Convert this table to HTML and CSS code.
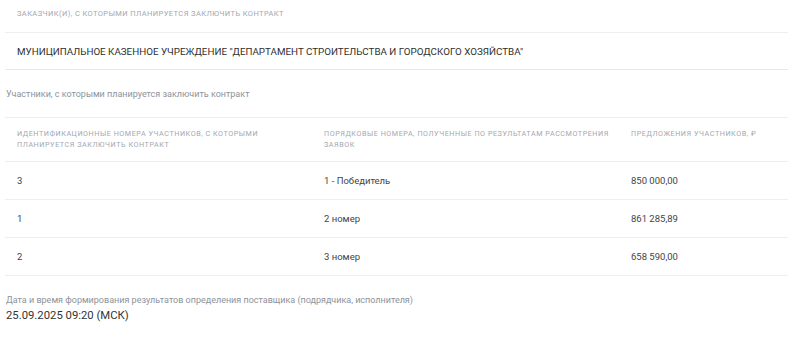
FILE: index.html
```html
<!DOCTYPE html>
<html lang="ru">
<head>
<meta charset="utf-8">
<link rel="stylesheet" href="styles.css">
</head>
<body>
<div class="page">
  <div class="cap-label">Заказчик(и), с которыми планируется заключить контракт</div>
  <div class="customer">МУНИЦИПАЛЬНОЕ КАЗЕННОЕ УЧРЕЖДЕНИЕ "ДЕПАРТАМЕНТ СТРОИТЕЛЬСТВА И ГОРОДСКОГО ХОЗЯЙСТВА"</div>
  <div class="sub-label">Участники, с которыми планируется заключить контракт</div>
  <div class="table">
    <div class="row head">
      <div class="cell">Идентификационные номера участников, с которыми планируется заключить контракт</div>
      <div class="cell">Порядковые номера, полученные по результатам рассмотрения заявок</div>
      <div class="cell">Предложения участников, ₽</div>
    </div>
    <div class="row">
      <div class="cell">3</div>
      <div class="cell">1 - Победитель</div>
      <div class="cell">850 000,00</div>
    </div>
    <div class="row">
      <div class="cell">1</div>
      <div class="cell">2 номер</div>
      <div class="cell">861 285,89</div>
    </div>
    <div class="row">
      <div class="cell">2</div>
      <div class="cell">3 номер</div>
      <div class="cell">658 590,00</div>
    </div>
  </div>
  <div class="date-block">
    <div class="date-label">Дата и время формирования результатов определения поставщика (подрядчика, исполнителя)</div>
    <div class="date-value">25.09.2025 09:20 (МСК)</div>
  </div>
</div>
</body>
</html>
```
FILE: styles.css
```css
html, body {
  margin: 0;
  padding: 0;
  background: #ffffff;
}
body {
  font-family: Roboto, "Noto Sans", sans-serif;
  color: #333333;
}
.page {
  width: 783px;
  margin-left: 5px;
}
.cap-label {
  padding: 9px 12px 0;
  height: 33px;
  box-sizing: border-box;
  font-size: 7.5px;
  line-height: 10px;
  text-transform: uppercase;
  letter-spacing: 0.4px;
  color: #a3a8b0;
  border-bottom: 1px solid #eceef0;
}
.customer {
  height: 37px;
  box-sizing: border-box;
  padding: 0 12px;
  display: flex;
  align-items: center;
  font-size: 9.8px;
  color: #2f2f2f;
  border-bottom: 1px solid #e6e8eb;
}
.sub-label {
  padding: 18px 1px 0;
  height: 48px;
  box-sizing: border-box;
  font-size: 9px;
  line-height: 12px;
  color: #8d939c;
  border-bottom: 1px solid #eceef0;
}
.row {
  display: grid;
  grid-template-columns: 307px 307px 1fr;
  height: 38px;
  box-sizing: border-box;
  align-items: center;
  border-bottom: 1px solid #eceef0;
  font-size: 9.5px;
  color: #444;
}
.row.head {
  height: 44px;
  align-items: start;
  padding-top: 10px;
  font-size: 7.2px;
  line-height: 11px;
  letter-spacing: 0.55px;
  text-transform: uppercase;
  color: #a3a8b0;
}
.cell {
  padding: 0 12px;
}
.row.head .cell {
  padding-right: 0;
}
.date-block {
  padding: 18px 1px 0;
}
.date-label {
  font-size: 9px;
  line-height: 12px;
  color: #8d939c;
}
.date-value {
  margin-top: 2px;
  font-size: 11.3px;
  line-height: 16px;
  color: #333;
}
```
